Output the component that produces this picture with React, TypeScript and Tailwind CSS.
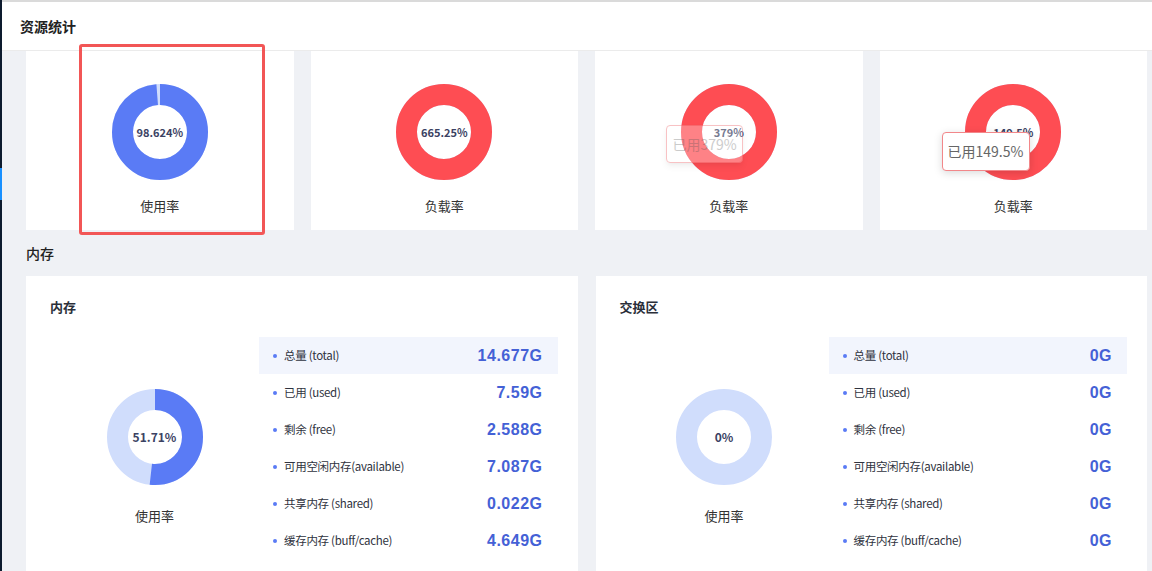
const FONT = { fontFamily: '"Noto Sans CJK SC", "Noto Sans", sans-serif' };

type Ring = { pct: number; color: string; track: string; label: string };

function Donut({ pct, color, track, label, textSize }: Ring & { textSize: string }) {
  const r = 37.5;
  const c = 2 * Math.PI * r;
  const p = Math.min(pct, 100) / 100;
  return (
    <div className="relative h-[96px] w-[96px] shrink-0">
      <svg width="96" height="96" viewBox="0 0 96 96" className="-rotate-90">
        <circle cx="48" cy="48" r={r} fill="none" stroke={track} strokeWidth="21" />
        {p > 0 && (
          <circle
            cx="48"
            cy="48"
            r={r}
            fill="none"
            stroke={color}
            strokeWidth="21"
            strokeDasharray={`${c * p} ${c}`}
          />
        )}
      </svg>
      <div
        className={`absolute inset-0 flex items-center justify-center font-bold text-[#3b4263] ${textSize}`}
      >
        {label}
      </div>
    </div>
  );
}

const BLUE = "#5a7bf5";
const RED = "#fe4d53";
const LIGHT = "#d0ddfc";

const top = [
  { pct: 98.624, color: BLUE, label: "98.624%", name: "使用率" },
  { pct: 100, color: RED, label: "665.25%", name: "负载率" },
  { pct: 100, color: RED, label: "379%", name: "负载率" },
  { pct: 100, color: RED, label: "149.5%", name: "负载率" },
];

const memRows = [
  ["总量 (total)", "14.677G"],
  ["已用 (used)", "7.59G"],
  ["剩余 (free)", "2.588G"],
  ["可用空闲内存(available)", "7.087G"],
  ["共享内存 (shared)", "0.022G"],
  ["缓存内存 (buff/cache)", "4.649G"],
];

const swapRows = memRows.map(([k]) => [k, "0G"]);

function DetailCard({ title, pct, label, rows }: { title: string; pct: number; label: string; rows: string[][] }) {
  return (
    <div className="h-[300px] bg-white pl-[24px] pr-[20px] pt-[22px]">
      <div className="text-[13px] font-bold leading-[18px] text-[#2b2f3a]">{title}</div>
      <div className="mt-[21px] flex">
        <div className="flex w-[209px] shrink-0 flex-col items-center pt-[52px]">
          <Donut pct={pct} color={BLUE} track={LIGHT} label={label} textSize="text-[12px]" />
          <div className="mt-[21px] text-[13px] leading-[20px] text-[#333]">使用率</div>
        </div>
        <div className="flex-1">
          {rows.map(([k, v], i) => (
            <div
              key={k}
              className={`flex h-[37px] items-center pl-[14px] pr-[15px] ${i === 0 ? "bg-[#f2f5fd]" : ""}`}
            >
              <span className="h-[4px] w-[4px] rounded-full bg-[#5a7bf5]" />
              <span className="ml-[7px] text-[11.5px] tracking-[-0.3px] text-[#2f3340]">{k}</span>
              <span
                className="ml-auto text-[16px] font-bold tracking-[0.5px] text-[#4461d6]"
                style={{ fontFamily: '"Liberation Sans", Arial, sans-serif' }}
              >
                {v}
              </span>
            </div>
          ))}
        </div>
      </div>
    </div>
  );
}

export default function App() {
  return (
    <div className="relative flex h-[571px] w-[1152px] overflow-hidden bg-[#eff1f5]" style={FONT}>
      <div className="flex w-[2px] shrink-0 flex-col bg-[#0d1b2e]">
        <div className="h-[168px] shrink-0" />
        <div className="h-[32px] shrink-0 bg-[#1890ff]" />
      </div>
      <div className="flex flex-1 flex-col border-t-2 border-[#dadada]">
        <div className="flex h-[49px] shrink-0 items-center border-b border-[#ebebeb] bg-white pl-[18px]">
          <span className="text-[14px] font-bold text-[#222]">资源统计</span>
        </div>
        <div className="shrink-0 pl-[24px] pr-[5px]">
          <div className="grid grid-cols-4 gap-[17px]">
            {top.map((t, i) => (
              <div key={i} className="relative flex h-[179px] flex-col items-center bg-white pt-[33px]">
                <Donut pct={t.pct} color={t.color} track={LIGHT} label={t.label} textSize="text-[11px]" />
                <div className="mt-[17px] text-[13px] leading-[18px] text-[#333]">{t.name}</div>
                {i === 2 && (
                  <div className="absolute left-[71px] top-[74px] flex h-[38px] w-[77px] items-center justify-center rounded-[4px] border border-[#f2878a] bg-white/60 text-[14px] text-[#999] opacity-50 shadow-md">
                    已用379%
                  </div>
                )}
                {i === 3 && (
                  <div className="absolute left-[62px] top-[81px] flex h-[39px] w-[88px] items-center justify-center rounded-[4px] border border-[#f2878a] bg-white text-[14px] text-[#666] shadow-[0_2px_8px_rgba(0,0,0,0.15)]">
                    已用149.5%
                  </div>
                )}
              </div>
            ))}
          </div>
          <div className="flex h-[46px] items-center text-[14px] font-medium text-[#222]">内存</div>
          <div className="grid grid-cols-2 gap-[18px]">
            <DetailCard title="内存" pct={51.71} label="51.71%" rows={memRows} />
            <DetailCard title="交换区" pct={0} label="0%" rows={swapRows} />
          </div>
        </div>
      </div>
      <div className="absolute left-[79px] top-[44px] h-[191px] w-[186px] rounded-[3px] border-[3px] border-[#f25656]" />
    </div>
  );
}
